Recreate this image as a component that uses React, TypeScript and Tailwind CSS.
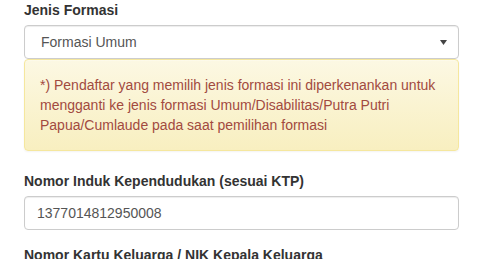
import React from "react";

export default function App() {
  return (
    <div className="w-[493px] h-[259px] overflow-hidden bg-white text-[14px] leading-[20px] text-[#333]" style={{ fontFamily: '"Liberation Sans", Arial, sans-serif' }}>
      <div className="ml-[24px] w-[435px]">
        <div>
          <label className="block mb-[5px] font-bold">Jenis Formasi</label>
          <div className="flex items-center h-[34px] border border-[#ccc] rounded-[4px] bg-white pl-[16px] pr-[10px] text-[#555] shadow-[inset_0_1px_1px_rgba(0,0,0,0.075)]">
            <span className="flex-1">Formasi Umum</span>
            <svg width="7" height="5" viewBox="0 0 7 5" className="mr-[1px]">
              <path d="M0 0 L7 0 L3.5 5 Z" fill="#444" />
            </svg>
          </div>
        </div>
        <div className="mb-[20px] border border-[#f5e79e] rounded-[4px] p-[15px] text-[#a24a3f] bg-[linear-gradient(to_bottom,#fcf8e3_0%,#f8efc0_100%)] shadow-[inset_0_1px_0_rgba(255,255,255,0.25),0_1px_2px_rgba(0,0,0,0.05)]">
          *) Pendaftar yang memilih jenis formasi ini diperkenankan untuk mengganti ke jenis formasi Umum/Disabilitas/Putra Putri Papua/Cumlaude pada saat pemilihan formasi
        </div>
        <div className="mb-[15px]">
          <label className="block mb-[5px] font-bold">Nomor Induk Kependudukan (sesuai KTP)</label>
          <div className="flex items-center h-[34px] border border-[#ccc] rounded-[4px] bg-white px-[12px] text-[#555] shadow-[inset_0_1px_1px_rgba(0,0,0,0.075)]">
            1377014812950008
          </div>
        </div>
        <div>
          <label className="block mb-[5px] font-bold">Nomor Kartu Keluarga / NIK Kepala Keluarga</label>
        </div>
      </div>
    </div>
  );
}
